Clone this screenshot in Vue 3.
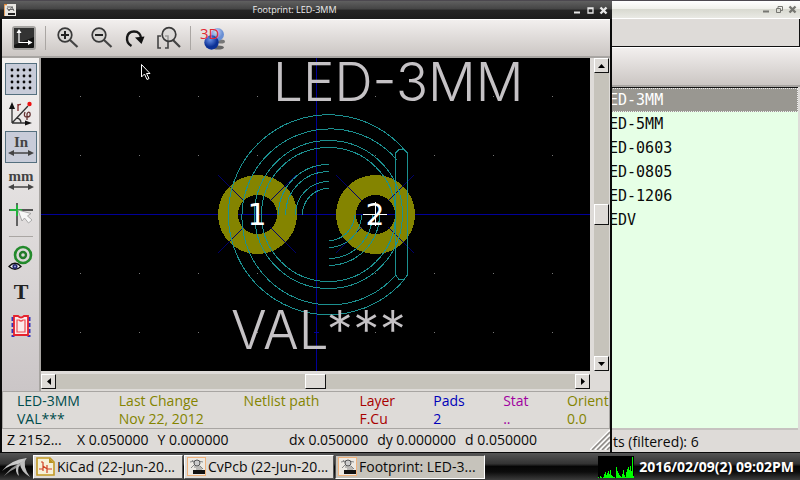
<script setup>
import { ref } from 'vue'

const footprints = ['ED-3MM', 'ED-5MM', 'ED-0603', 'ED-0805', 'ED-1206', 'EDV']
const selected = ref(0)

const info = [
  { label: 'LED-3MM', value: 'VAL***', tone: 'teal' },
  { label: 'Last Change', value: 'Nov 22, 2012', tone: 'olive' },
  { label: 'Netlist path', value: '', tone: 'olive' },
  { label: 'Layer', value: 'F.Cu', tone: 'red' },
  { label: 'Pads', value: '2', tone: 'blue' },
  { label: 'Stat', value: '..', tone: 'purple' },
  { label: 'Orient', value: '0.0', tone: 'olive' }
]

const tasks = [
  { title: 'KiCad (22-Jun-20...', icon: 'kicad', active: false },
  { title: 'CvPcb (22-Jun-20...', icon: 'cvpcb', active: false },
  { title: 'Footprint: LED-3...', icon: 'cvpcb', active: true }
]

const gridX = [80, 139, 198, 257, 375, 434, 493, 552]
const gridY = [96, 155, 273, 332]
const pads = [{ x: 257, name: '1' }, { x: 375, name: '2' }]
const upperArcs = [26, 33, 43, 50]
const lowerArcs = [26, 33, 44, 51]
const load = [1, 0, 2, 1, 0, 1, 4, 6, 3, 5, 7, 4, 8, 3, 2, 1, 1, 0, 11, 7, 5, 3, 2, 1, 4, 8, 3, 1, 6, 9, 11, 8, 12, 7, 21, 2]
</script>

<template>
  <main class="desktop">
    <section class="window back">
      <header class="title light">
        <div class="controls">
          <button aria-label="Minimize"><svg width="9" height="9"><path d="M1 6.5H7" stroke-width="2" /></svg></button>
          <button aria-label="Restore"><svg width="9" height="9"><path d="M3 3V1.500H7.500V5.500H5M1.500 3.500H5.500V7.500H1.500Z" /></svg></button>
          <button aria-label="Close"><svg width="9" height="9"><path d="M1.500 1.500L7.500 7.500M7.500 1.500L1.500 7.500" stroke-width="2.400" /></svg></button>
        </div>
      </header>
      <div class="menubar"></div>
      <div class="toolbar back-tools"></div>
      <ul class="list">
        <li v-for="(name, i) in footprints" :key="name">
          <button class="item" :class="{ chosen: selected === i }" @click="selected = i">{{ name }}</button>
        </li>
      </ul>
      <footer class="back-status">ts (filtered): 6</footer>
    </section>

    <section class="window front">
      <header class="title dark">
        <svg class="app-icon" width="12" height="12" viewBox="0 0 12 12">
          <rect width="12" height="12" fill="#e8e6e2" />
          <path d="M0 0V12M0 .5H3" stroke="#e08a3a" stroke-width="1.500" />
          <path d="M3 3H9M4 5.500H10M3 4L5 7L8 3L10 7" stroke="#666" fill="none" />
          <path d="M4 9H11V11H4Z" fill="#222" />
        </svg>
        <h1>Footprint: LED-3MM</h1>
        <div class="controls">
          <button aria-label="Minimize"><svg width="9" height="9"><path d="M1 6.500H7" stroke-width="2" /></svg></button>
          <button aria-label="Maximize"><svg width="9" height="9"><path d="M2 2V7H7V2ZM2 2.500H7" stroke-width="1.300" /></svg></button>
          <button aria-label="Close"><svg width="9" height="9"><path d="M1.500 1.500L7.500 7.500M7.500 1.500L1.500 7.500" stroke-width="2.400" /></svg></button>
        </div>
      </header>

      <div class="toolbar">
        <button class="tool" aria-label="Display options">
          <svg width="26" height="26" viewBox="0 0 26 26">
            <rect x="2" y="2" width="22" height="22" rx="2" fill="#141414" stroke="#a5a3a1" stroke-width="2" />
            <path d="M3 3H23V12L3 20Z" fill="#333" />
            <path d="M8 7V17.500H18" fill="none" stroke="#fff" stroke-width="1.200" />
            <path d="M8 4L10.500 8H5.500ZM21.500 17.500L17 15V20Z" fill="#fff" />
          </svg>
        </button>
        <span class="rule"></span>
        <button class="tool" aria-label="Zoom in">
          <svg width="26" height="26" viewBox="0 0 26 26" fill="none">
            <path d="M16 15L23.500 22" stroke="#444" stroke-width="2.200" />
            <circle cx="11" cy="10" r="6.800" fill="#d7d5d3" stroke="#3a3a3a" stroke-width="1.700" />
            <path d="M7 10H15M11 6V14" stroke="#222" stroke-width="2" />
          </svg>
        </button>
        <button class="tool" aria-label="Zoom out">
          <svg width="26" height="26" viewBox="0 0 26 26" fill="none">
            <path d="M16 15L23.500 22" stroke="#444" stroke-width="2.200" />
            <circle cx="11" cy="10" r="6.800" fill="#d7d5d3" stroke="#3a3a3a" stroke-width="1.700" />
            <path d="M7 10H15" stroke="#222" stroke-width="2" />
          </svg>
        </button>
        <button class="tool" aria-label="Redraw">
          <svg width="26" height="26" viewBox="0 0 26 26" fill="none">
            <path d="M9.500 21C2.500 17 4 6.500 12 6.500C16.500 6.500 19 9.500 19 13.500" stroke="#181818" stroke-width="2.400" />
            <path d="M13 12.500L22.500 11.500L19.500 19Z" fill="#111" />
          </svg>
        </button>
        <button class="tool" aria-label="Fit to screen">
          <svg width="26" height="26" viewBox="0 0 26 26" fill="none">
            <path d="M5 11H2V23H5M9 11H12V23H9" stroke="#444" stroke-width="1.600" />
            <path d="M17 15L24 22" stroke="#444" stroke-width="2.200" />
            <circle cx="13" cy="9.500" r="6.800" fill="#d7d5d3" fill-opacity=".6" stroke="#3a3a3a" stroke-width="1.700" />
          </svg>
        </button>
        <span class="rule"></span>
        <button class="tool" aria-label="3D display">
          <svg width="26" height="26" viewBox="0 0 26 26">
            <defs>
              <radialGradient id="pale" cx=".4" cy=".3"><stop offset="0" stop-color="#c9d9f5" /><stop offset="1" stop-color="#6a8fd4" /></radialGradient>
              <radialGradient id="deep" cx=".4" cy=".3"><stop offset="0" stop-color="#6a92e8" /><stop offset="1" stop-color="#0c3196" /></radialGradient>
            </defs>
            <ellipse cx="19" cy="22.500" rx="6" ry="2" fill="#666" />
            <ellipse cx="22" cy="16.500" rx="4" ry="2" fill="#777" />
            <circle cx="18.500" cy="9.500" r="6.500" fill="url(#pale)" />
            <circle cx="12.500" cy="17.500" r="7.200" fill="url(#deep)" />
            <text x="1" y="14" class="three-d">3D</text>
          </svg>
        </button>
      </div>

      <div class="work">
        <aside class="side">
          <button class="tool pressed" aria-label="Grid">
            <svg width="26" height="26" viewBox="0 0 26 26" fill="#080808">
              <g v-for="r in 4" :key="r">
                <circle v-for="c in 4" :key="c" :cx="c * 6 - 2" :cy="r * 6 - 2" r="1.400" />
              </g>
            </svg>
          </button>
          <button class="tool" aria-label="Polar coordinates">
            <svg width="26" height="26" viewBox="0 0 26 26" fill="none" stroke="#333">
              <path d="M4 23V7M4 23H20M4 23L20 6M9 18Q13 19 13 23" stroke-width="1.300" />
              <path d="M4 2L7 9H1ZM24 23L17 20.500V25.500Z" fill="#111" stroke="none" />
              <circle cx="21.500" cy="4" r="2.200" fill="#e11" stroke="none" />
              <path d="M10 11V4M10 6Q11 4 13 4.500" stroke="#833" stroke-width="1.400" />
              <path d="M17 12Q15 17 19 17Q23 17 22 13Q20 11 19 14V20" stroke="#633" stroke-width="1.300" />
            </svg>
          </button>
          <button class="tool pressed" aria-label="Units in inches">
            <svg width="26" height="26" viewBox="0 0 26 26">
              <text x="13" y="13" class="unit">In</text>
              <path d="M4 19H22" stroke="#444" stroke-width="1.500" /><path d="M0 19L6 16V22ZM26 19L20 16V22Z" fill="#444" />
            </svg>
          </button>
          <button class="tool" aria-label="Units in millimeters">
            <svg width="26" height="26" viewBox="0 0 26 26">
              <text x="13" y="13" class="unit">mm</text>
              <path d="M4 19H22" stroke="#444" stroke-width="1.500" /><path d="M0 19L6 16V22ZM26 19L20 16V22Z" fill="#444" />
            </svg>
          </button>
          <button class="tool" aria-label="Cursor shape">
            <svg width="26" height="26" viewBox="0 0 26 26">
              <path d="M1 8H25M9 1V24" stroke="#555" stroke-width="1.800" />
              <path d="M2 8H14M9 3V14" stroke="#22b03c" stroke-width="2" />
              <path d="M10 8L23 11.500L19.500 14L24 18L20.500 21L16.500 16L14 19Z" fill="#f7f7f7" stroke="#999" stroke-width=".8" />
            </svg>
          </button>
          <hr />
          <button class="tool" aria-label="Show pads">
            <svg width="26" height="28" viewBox="0 0 26 28" fill="none">
              <circle cx="15" cy="11" r="8" stroke="#238a2c" stroke-width="2.600" />
              <circle cx="15" cy="11" r="3" stroke="#237a2a" stroke-width="2.400" />
              <path d="M1 22.500Q7 16 13 22.500Q7 28 1 22.500Z" fill="#fff" stroke="#111" stroke-width="1.300" />
              <circle cx="7" cy="22.500" r="2.600" fill="#22226a" /><circle cx="7" cy="22.500" r="1" fill="#9ad" />
            </svg>
          </button>
          <button class="tool" aria-label="Show texts">
            <svg width="26" height="26" viewBox="0 0 26 26"><text x="13" y="20" class="letter">T</text></svg>
          </button>
          <button class="tool" aria-label="Show edges">
            <svg width="26" height="26" viewBox="0 0 26 26" fill="none">
              <path d="M5 4V24M21 4V24" stroke="#3434bc" stroke-width="3" stroke-dasharray="4 2" />
              <path d="M6 3H10Q13 6 16 3H20V22H6Z" fill="#fbeaea" stroke="#e5232e" stroke-width="1.800" />
              <path d="M9 7H11Q13 9 15 7H17V19H9Z" stroke="#ee4b50" stroke-width="1.200" />
            </svg>
          </button>
        </aside>

        <div class="viewport">
          <svg class="board" viewBox="41 58 549 313" preserveAspectRatio="xMidYMid slice">
            <g class="grid">
              <template v-for="y in gridY" :key="y">
                <rect v-for="x in gridX" :key="x" :x="x" :y="y" width="1" height="1" />
              </template>
            </g>
            <g class="axis">
              <path d="M316.500 58V371M41 214.500H590M314 332.500H319" />
            </g>
            <g v-for="pad in pads" :key="pad.name">
              <circle class="pad" :cx="pad.x + 0.5" cy="214.500" r="29.500" />
              <path
                class="clear"
                :d="`M${pad.x - 39} 175L${pad.x - 13} 201M${pad.x + 39} 175L${pad.x + 13} 201M${pad.x - 39} 253L${pad.x - 13} 227M${pad.x + 39} 253L${pad.x + 13} 227`"
              />
            </g>
            <g class="silk">
              <path d="M407 153A100 100 0 1 0 405 279" />
              <path d="M397 160A88 88 0 1 0 396 275" />
              <circle cx="328.500" cy="214.500" r="74" />
              <circle cx="328.500" cy="214.500" r="67" />
              <path v-for="r in upperArcs" :key="'u' + r" :d="`M${328.5 - r} 214.500A${r} ${r} 0 0 1 328.500 ${214.5 - r}`" />
              <path v-for="r in lowerArcs" :key="'l' + r" :d="`M${328.5 + r} 214.500A${r} ${r} 0 0 1 328.500 ${214.5 + r}`" />
              <path d="M395.500 275V153L399 149.500H404L407.500 153V275L404 279.500H399Z" />
            </g>
            <text x="273" y="101" class="stroke-text">LED-3MM</text>
            <text x="231" y="349" class="stroke-text">VAL***</text>
            <text v-for="pad in pads" :key="'n' + pad.name" :x="pad.x" y="225" class="pad-name">{{ pad.name }}</text>
            <path class="cross" d="M363 214.500H387M375.500 202V226" />
            <path class="pointer" d="M141.500 64.500V77L144.500 74L147 79.500L149 78.500L146.500 73.500H150Z" />
          </svg>
        </div>

        <div class="scroll vertical">
          <button aria-label="Scroll up"><svg width="7" height="4"><path d="M3.500 0L7 4H0Z" /></svg></button>
          <div class="track"><span class="thumb"></span></div>
          <button aria-label="Scroll down"><svg width="7" height="4"><path d="M3.500 4L7 0H0Z" /></svg></button>
        </div>

        <div class="scroll horizontal">
          <button aria-label="Scroll left"><svg width="4" height="7"><path d="M0 3.500L4 0V7Z" /></svg></button>
          <div class="track"><span class="thumb"></span></div>
          <button aria-label="Scroll right"><svg width="4" height="7"><path d="M4 3.500L0 0V7Z" /></svg></button>
        </div>
      </div>

      <dl class="info">
        <div v-for="cell in info" :key="cell.label" :class="cell.tone">
          <dt>{{ cell.label }}</dt>
          <dd>{{ cell.value }}</dd>
        </div>
      </dl>

      <footer class="status">
        <span class="zoom">Z 2152...</span>
        <span class="position"><span>X 0.050000</span><span>Y 0.000000</span></span>
        <span class="delta"><span>dx 0.050000</span><span>dy 0.000000</span><span>d 0.050000</span></span>
        <svg class="grip" width="20" height="20" viewBox="0 0 20 20">
          <path d="M0 20L20 0M5 20L20 5M10 20L20 10M15 20L20 15" stroke="#fff" stroke-width="1.500" />
          <path d="M2 20L20 2M7 20L20 7M12 20L20 12M17 20L20 17" stroke="#8c8986" stroke-width="1.500" />
        </svg>
      </footer>
    </section>

    <nav class="taskbar">
      <button class="start" aria-label="Menu">
        <svg width="32" height="26" viewBox="0 0 32 26">
          <path d="M2 17Q10 6 27 4L21 10Q10 10 2 17Z" fill="#c9c9c9" />
          <path d="M4 22Q12 12 22 8L20 12Q11 16 4 22Z" fill="#8e8e8e" />
          <path d="M26 4Q22 12 30 23Q20 17 20 9ZM20 10Q17 15 19 22Q14 18 17 11Z" fill="#bdbdbd" />
        </svg>
      </button>
      <button v-for="task in tasks" :key="task.title" class="task" :class="{ active: task.active }">
        <svg v-if="task.icon === 'kicad'" width="19" height="19" viewBox="0 0 19 19">
          <path d="M1 1H14L18 5V18H1Z" fill="#f6f0d9" stroke="#c39a25" stroke-width="1.600" />
          <path d="M13 1V6H18Z" fill="#b89221" />
          <path d="M3 12H7M7 5V14M7 9L11 12H16M11 8V16M7 5H5" stroke="#cf3f22" fill="none" stroke-width="1.200" />
        </svg>
        <svg v-else width="19" height="19" viewBox="0 0 19 19">
          <rect x=".5" y=".5" width="18" height="18" fill="#ece9e3" stroke="#f0b27c" />
          <path d="M3 5L8 4M11 4L16 5M4 11L7 8M13 9L16 12M5 3L9 8" stroke="#888" fill="none" />
          <circle cx="10" cy="6" r="3" fill="#ccc" stroke="#555" />
          <path d="M7 10H14M9 12H15" stroke="#888" />
          <rect x="6" y="13" width="12" height="4" fill="#111" />
        </svg>
        <span>{{ task.title }}</span>
      </button>
      <div class="tray">
        <svg class="cpu" width="36" height="22" viewBox="0 0 36 22">
          <rect width="36" height="22" fill="#000" />
          <rect v-for="(h, i) in load" :key="i" :x="i" :y="22 - h" width="1" :height="h" fill="#0f0" />
        </svg>
        <time>2016/02/09(2) 09:02PM</time>
      </div>
    </nav>
  </main>
</template>

<style>
body {
  margin: 0;
  overflow: hidden;
}
</style>

<style scoped>
.desktop {
  position: relative;
  display: flex;
  flex-direction: column;
  justify-content: flex-end;
  height: 100vh;
  background: #0c0c0c;
  color: #0a0a0a;
  font: 14px/18px 'Open Sans', 'Noto Sans', sans-serif;
}
button {
  margin: 0;
  padding: 0;
  border: 0;
  background: none;
  color: inherit;
  font: inherit;
}
svg {
  display: block;
}
.window {
  position: absolute;
  top: 0;
  bottom: 27px;
  display: flex;
  flex-direction: column;
  box-sizing: border-box;
}
.front {
  left: 0;
  width: 76.5%;
  padding: 0 2px 1px 2px;
  background: #dedbd8;
  border-bottom: 1px solid #0a0a0a;
  box-shadow: inset 2px 0 #0a0a0a, inset -2px 0 #0a0a0a;
}
.back {
  right: 0;
  width: 24%;
  background: #dedbd8;
  border-bottom: 1px solid #0a0a0a;
}
.title {
  display: flex;
  align-items: center;
  flex: none;
  height: 19px;
  box-sizing: border-box;
  border-top: 1px solid #4c484f;
}
.title.light {
  justify-content: flex-end;
  background: linear-gradient(#fff, #f0f0eb 45%, #d9dad1 50%, #e9e9e4);
  border-bottom: 1px solid #fff;
  padding-right: 3px;
}
.title.dark {
  background: linear-gradient(#606060, #444 45%, #252525 50%, #1c1c1c);
  margin: 0 -2px;
  padding: 0 4px;
}
.title h1 {
  flex: 1;
  margin: 0;
  color: #eee;
  font-size: 9px;
  font-weight: 400;
  text-align: center;
}
.controls {
  display: flex;
  gap: 4px;
}
.controls path {
  fill: none;
  stroke: #e6e6e6;
}
.light .controls path {
  stroke: #777772;
}
.toolbar {
  display: flex;
  align-items: center;
  flex: none;
  height: 39px;
  box-sizing: border-box;
  gap: 2px;
  padding: 0 6px;
  background: linear-gradient(#f2efee, #cbc6c3);
  border-top: 1px solid #fff;
  border-bottom: 2px solid #a8a5a2;
}
.tool {
  display: grid;
  place-items: center;
  width: 32px;
  height: 32px;
  box-sizing: border-box;
  flex: none;
}
.rule {
  width: 1px;
  height: 24px;
  margin: 0 3px;
  background: #aaa6a3;
}
.three-d {
  fill: #e02a35;
  font: 15px 'Open Sans', sans-serif;
}
.work {
  display: grid;
  grid-template-columns: 39px minmax(0, 1fr) 20px;
  grid-template-rows: minmax(0, 1fr) 20px;
  flex: 1;
  min-height: 0;
}
.side {
  grid-row: 1 / 3;
  display: flex;
  flex-direction: column;
  gap: 2px;
  padding: 5px 2px 0 3px;
  border-right: 2px solid #a8a5a2;
  background: linear-gradient(#f3f1f0, #cbc6c7);
}
.side hr {
  flex: none;
  width: 24px;
  height: 1px;
  margin: 3px 4px;
  border: 0;
  background: #aaa6a3;
}
.pressed {
  background: #c8ccd9;
  border: 1px solid #55707f;
}
.unit {
  fill: #444;
  font: bold 15px 'Liberation Serif', serif;
  text-anchor: middle;
}
.letter {
  fill: #222;
  font: bold 22px 'Liberation Serif', serif;
  text-anchor: middle;
}
.viewport {
  background: #000;
  overflow: hidden;
}
.board {
  width: 100%;
  height: 100%;
}
.grid rect {
  fill: #777;
}
.axis path,
.clear {
  fill: none;
  stroke: #000098;
  shape-rendering: crispEdges;
}
.clear {
  stroke: #00006c;
}
.pad {
  fill: none;
  stroke: #848400;
  stroke-width: 20;
  shape-rendering: crispEdges;
}
.silk {
  fill: none;
  stroke: #1c9090;
  shape-rendering: crispEdges;
}
.stroke-text {
  fill: #c5c2c5;
  font: 300 53px Inter, Roboto, sans-serif;
}
.pad-name {
  fill: #fff;
  font: 30px 'DejaVu Sans', sans-serif;
  text-anchor: middle;
}
.cross {
  stroke: #fff;
  shape-rendering: crispEdges;
}
.pointer {
  fill: #000;
  stroke: #fff;
}
.scroll {
  display: flex;
}
.vertical {
  flex-direction: column;
  margin-left: 4px;
  width: 15px;
}
.horizontal {
  height: 15px;
  margin-top: 3px;
}
.scroll button,
.thumb {
  display: grid;
  place-items: center;
  width: 15px;
  height: 15px;
  box-sizing: border-box;
  flex: none;
  background: #dedbd7;
  border: 1px solid;
  border-color: #fff #111 #111 #fff;
}
.track {
  display: flex;
  align-items: center;
  justify-content: center;
  flex: 1;
  background: #c6c3bb;
}
.vertical .thumb {
  height: 21px;
}
.horizontal .thumb {
  width: 21px;
}
.info {
  display: grid;
  grid-template-columns: 102fr 125fr 116fr 74fr 70fr 64fr 42fr;
  margin: 0;
  padding: 0 0 0 14px;
  border: 1px solid #a8a5a2;
  overflow: hidden;
}
.info div {
  min-width: 0;
  white-space: nowrap;
}
.info dd {
  margin: 0;
  min-height: 18px;
}
.teal { color: #004c4c; }
.olive { color: #848400; }
.red { color: #a80000; }
.blue { color: #0000b8; }
.purple { color: #a000a0; }
.status {
  display: flex;
  align-items: center;
  flex: none;
  height: 22px;
  padding-left: 5px;
}
.status .zoom {
  width: 70px;
}
.position {
  display: flex;
  gap: 9px;
  flex: 1;
}
.delta {
  display: flex;
  gap: 9px;
}
.grip {
  margin-left: 53px;
}
.menubar {
  flex: none;
  height: 28px;
  box-sizing: border-box;
  border-bottom: 1px solid #111;
  border-right: 1px solid #111;
}
.back-tools {
  height: 40px;
  border-bottom-width: 2px;
}
.list {
  flex: 1;
  margin: 0 2px 0 0;
  padding: 0;
  list-style: none;
  background: #e6ffe6;
  border-top: 1px solid #111;
  border-bottom: 2px solid #c6c3c0;
  font: 15px/22px 'DejaVu Sans Mono', monospace;
}
.item {
  display: block;
  width: 100%;
  height: 24px;
  box-sizing: border-box;
  border: 1px solid transparent;
  text-align: left;
}
.chosen {
  background: #999791;
  border: 1px dotted #eee;
  color: #fff;
}
.back-status {
  flex: none;
  height: 22px;
  line-height: 24px;
  padding-left: 5px;
}
.taskbar {
  display: flex;
  align-items: center;
  flex: none;
  height: 27px;
  gap: 1px;
  background: linear-gradient(#555, #333 40%, #060606 50%, #0c0c0c 70%, #3c3c3c);
}
.start {
  width: 32px;
}
.task {
  display: flex;
  align-items: center;
  gap: 2px;
  flex: 0 1 150px;
  height: 24px;
  box-sizing: border-box;
  padding-left: 2px;
  border: 1px solid;
  border-color: #fff #555 #555 #fff;
  background: #dedbd7;
  white-space: nowrap;
}
.task.active {
  background: #c6c3bb;
  border-color: #555 #fff #fff #555;
}
.tray {
  display: flex;
  align-items: center;
  gap: 5px;
  margin-left: auto;
  padding-right: 6px;
  color: #fff;
  font-weight: 700;
}
</style>
